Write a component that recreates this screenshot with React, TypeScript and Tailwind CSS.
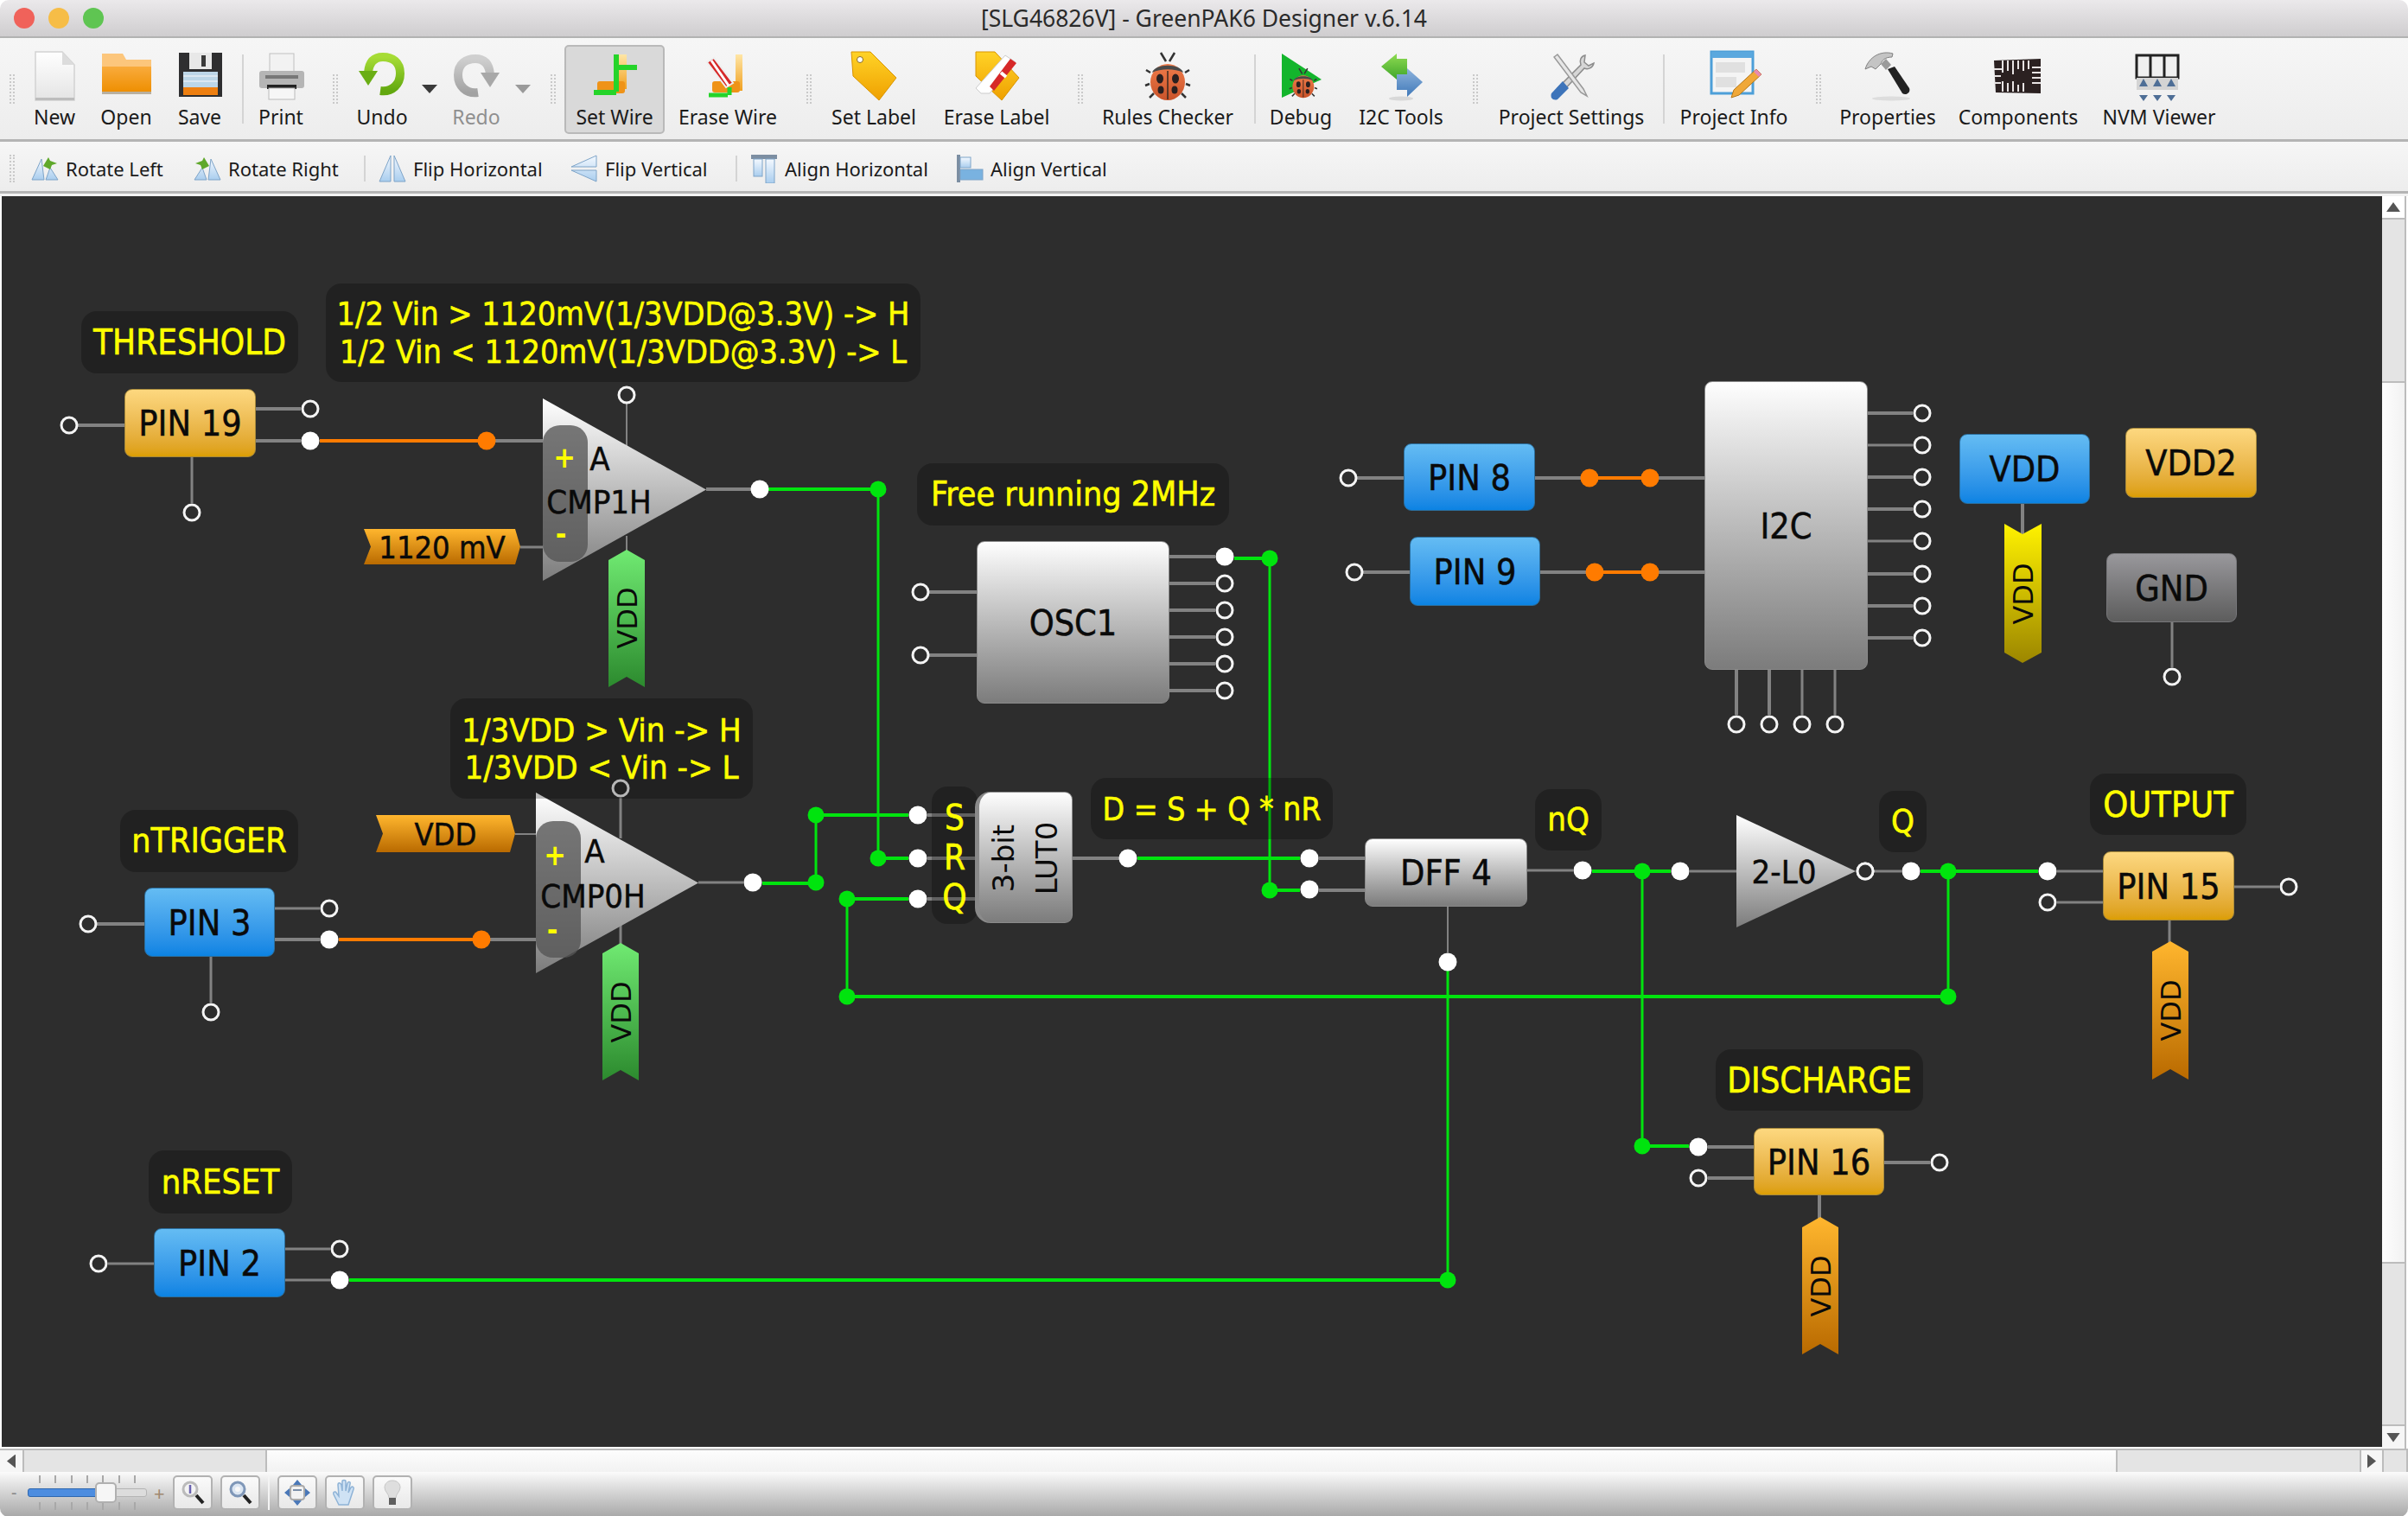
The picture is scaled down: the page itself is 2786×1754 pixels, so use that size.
import type { ReactNode } from "react";
import clsx from "clsx";

const uiFont = "font-['Noto_Sans',sans-serif]";
const schFont = "font-['DejaVu_Sans_Condensed','DejaVu_Sans',sans-serif]";

type Cell =
  | { kind: "handle" | "sep" | "arrow"; w: string; off?: boolean }
  | { kind: "tool"; w: string; label: string; icon: ReactNode; off?: boolean; on?: boolean };

function Gradients() {
  const stops: [string, string, string][] = [
    ["gDoc", "#ffffff", "#e4e4e4"],
    ["gFolder", "#f9ab3c", "#ee8e00"],
    ["gGreen", "#a6dc35", "#62a80f"],
    ["gGrey", "#cfcfcf", "#a2a2a2"],
    ["gTag", "#ffd327", "#efa000"],
    ["gBug", "#f07c4a", "#c9532a"],
    ["gBlue", "#8fb4dd", "#3f78b8"],
    ["gLime", "#8fdc52", "#3fa52a"],
    ["gPale", "#ffe6a6", "#f0a020"],
    ["gTri", "#ffffff", "#7c7c7c"],
    ["gTagG", "#70ea72", "#2c8a2e"],
    ["gTagO", "#ffb62e", "#b96a00"],
    ["gTagY", "#fff200", "#9c8600"],
    ["gSky", "#f4f9ff", "#a9cdee"],
  ];
  return (
    <svg className="absolute h-0 w-0" aria-hidden="true">
      <defs>
        {stops.map(([id, a, b]) => (
          <linearGradient key={id} id={id} x1="0" y1="0" x2="0" y2="1">
            <stop offset="0" stopColor={a} />
            <stop offset="1" stopColor={b} />
          </linearGradient>
        ))}
      </defs>
    </svg>
  );
}

function Ic({ children }: { children: ReactNode }) {
  return (
    <svg viewBox="0 0 64 64" className="h-[64px] w-[64px] shrink-0">
      {children}
    </svg>
  );
}

function Bug({ t = "" }: { t?: string }) {
  return (
    <g transform={t}>
      <path d="M24 5l6 10M40 5l-6 10" stroke="#333" strokeWidth="2.5" fill="none" />
      <path d="M12 28l-5-3M52 28l5-3M11 41l-5 2M53 41l5 2M16 52l-5 5M48 52l5 5" stroke="#333" strokeWidth="2.5" />
      <ellipse cx="32" cy="39" rx="20" ry="21" fill="url(#gBug)" />
      <path d="M14 28c3-11 33-11 36 0-10-5-26-5-36 0z" fill="#4a4a4a" />
      <path d="M32 26v33" stroke="#3a2a20" strokeWidth="1.5" />
      <ellipse cx="23" cy="35" rx="4" ry="5.5" fill="#2a2020" />
      <ellipse cx="41" cy="35" rx="4" ry="5.5" fill="#2a2020" />
      <ellipse cx="24" cy="48" rx="3.5" ry="4.5" fill="#2a2020" />
      <ellipse cx="40" cy="48" rx="3.5" ry="4.5" fill="#2a2020" />
    </g>
  );
}

const icons = {
  file: (
    <Ic>
      <path d="M10 4h31l14 15v41H10z" fill="url(#gDoc)" stroke="#d2d2d2" strokeWidth="1.5" />
      <path d="M41 4v15h14z" fill="#dcdcdc" />
      <rect x="10" y="57" width="45" height="3" fill="#bdbdbd" />
    </Ic>
  ),
  open: (
    <Ic>
      <path d="M4 6h24l4 7h29v10H4z" fill="#fcc67c" />
      <rect x="4" y="21" width="57" height="30" fill="url(#gFolder)" />
      <rect x="4" y="50" width="57" height="3" fill="#b9b0a0" />
    </Ic>
  ),
  save: (
    <Ic>
      <path d="M8 5h50v51H8z" fill="#2e2e30" />
      <rect x="20" y="5" width="26" height="19" fill="#e8e8e8" />
      <rect x="34" y="8" width="5" height="13" fill="#3a3a3a" />
      <rect x="13" y="27" width="40" height="18" fill="#bcd6e8" />
      <path d="M13 32h40M13 38h40" stroke="#e6eef4" strokeWidth="1.5" />
      <rect x="13" y="45" width="40" height="9" fill="#ee7f10" />
    </Ic>
  ),
  print: (
    <Ic>
      <rect x="19" y="6" width="28" height="22" fill="#f2f2f2" stroke="#c0c0c0" />
      <rect x="7" y="26" width="52" height="20" rx="3" fill="#b5b5b5" />
      <rect x="14" y="31" width="38" height="4" fill="#777" />
      <rect x="16" y="42" width="34" height="5" fill="#222" />
      <rect x="18" y="46" width="30" height="13" fill="#f6f6f6" stroke="#bbb" />
    </Ic>
  ),
  undo: (
    <Ic>
      <path d="M30 49c14 2 23-8 23-20 0-13-9-19-20-19S17 17 16 28" fill="none" stroke="url(#gGreen)" strokeWidth="10" />
      <path d="M5 26l22 0-11 17z" fill="#6aae14" />
    </Ic>
  ),
  redo: (
    <Ic>
      <path d="M34 51c-14 2-23-8-23-20 0-13 9-19 20-19s16 7 17 18" fill="none" stroke="url(#gGrey)" strokeWidth="10" />
      <path d="M59 28l-22 0 11 17z" fill="#a8a8a8" />
    </Ic>
  ),
  setWire: (
    <Ic>
      <rect x="37" y="7" width="9" height="40" fill="url(#gPale)" />
      <rect x="12" y="38" width="32" height="14" rx="3" fill="#ef9318" />
      <path d="M34 7v43M34 22h24M8 51h26" stroke="#25d42a" strokeWidth="6" fill="none" />
    </Ic>
  ),
  eraseWire: (
    <Ic>
      <rect x="41" y="7" width="8" height="42" fill="url(#gPale)" />
      <rect x="14" y="38" width="32" height="13" rx="3" fill="#ef9318" />
      <path d="M10 54h22M34 45v9" stroke="#25d42a" strokeWidth="5" fill="none" />
      <path d="M8 16l8-5 22 29-8 5z" fill="#d62828" stroke="#eee" strokeWidth="2" />
      <path d="M13 14l20 29" stroke="#fff" strokeWidth="3" />
    </Ic>
  ),
  setLabel: (
    <Ic>
      <path d="M6 4h22l30 30-20 26L8 32z" fill="url(#gTag)" stroke="#d99400" />
      <circle cx="16" cy="13" r="3.5" fill="#fff" stroke="#8a6a20" />
    </Ic>
  ),
  eraseLabel: (
    <Ic>
      <path d="M8 4h22l28 30-20 26L8 32z" fill="url(#gTag)" stroke="#d99400" />
      <path d="M14 52l-6-6 34-38 12 8-30 36z" fill="#fff" stroke="#ccc" />
      <path d="M24 44l24-32 7 5-26 32z" fill="#d62828" />
      <path d="M37 28l6 5" stroke="#fff" strokeWidth="4" />
    </Ic>
  ),
  bug: (
    <Ic>
      <Bug />
    </Ic>
  ),
  debug: (
    <Ic>
      <path d="M10 6l46 30-46 21z" fill="#13b52c" />
      <Bug t="translate(15 20) scale(0.62)" />
    </Ic>
  ),
  i2c: (
    <Ic>
      <ellipse cx="32" cy="58" rx="14" ry="2.5" fill="#d8d8d8" />
      <path d="M9 21L27 6v6h12v18H27v6z" fill="url(#gLime)" />
      <path d="M57 39L39 23v7H27v18h12v8z" fill="url(#gBlue)" />
    </Ic>
  ),
  settings: (
    <Ic>
      <path d="M48 8c-5 1-7 6-5 11L16 46l5 5 26-28c5 2 10-1 11-6l-6 3-5-4z" fill="#d6d6d6" stroke="#8c8c8c" strokeWidth="1.5" />
      <path d="M12 10l4-3 30 40 4 8-7-4z" fill="#e6e6e6" stroke="#999" strokeWidth="1.5" />
      <path d="M22 38l7 8-13 13c-5 2-9-2-7-7z" fill="#3d74ba" />
    </Ic>
  ),
  info: (
    <Ic>
      <rect x="6" y="4" width="48" height="48" fill="#f4f4f4" stroke="#4d9fd8" strokeWidth="3" />
      <rect x="6" y="4" width="48" height="7" fill="#5aa8de" />
      <rect x="11" y="16" width="34" height="12" fill="#e0e0e0" />
      <rect x="11" y="33" width="24" height="12" fill="#e0e0e0" />
      <path d="M58 24l6 6-26 24-9 3 3-9z" fill="#f0a838" stroke="#b57818" />
      <path d="M58 24l6 6-3 3-6-6z" fill="#e88ab0" />
    </Ic>
  ),
  hammer: (
    <Ic>
      <path d="M6 24C10 10 24 2 38 6l-1 4c-8 0-12 4-13 8l-6 6-5-3z" fill="#c4c4c4" stroke="#808080" />
      <path d="M24 18l6-6 6 7-6 6z" fill="#9a9a9a" />
      <path d="M32 24l8-3 17 25c2 5-4 9-8 6z" fill="#222" />
      <ellipse cx="36" cy="58" rx="22" ry="2.5" fill="#ddd" />
    </Ic>
  ),
  chip: (
    <Ic>
      <path d="M4 14l54-2v40l-52-1z" fill="#2b2121" />
      <path d="M14 14v14M20 14v12M26 14v16M32 14v10M38 14v12M44 14v10M4 24h10M4 32h8M4 40h8M48 22h10M48 28h10M48 34h10M48 40h10M14 50V38M20 50V40M26 50V38M32 50v-8M38 50V40"
        stroke="#e8e4e4" strokeWidth="2" fill="none" />
    </Ic>
  ),
  nvm: (
    <Ic>
      <rect x="6" y="8" width="48" height="26" fill="#f0f0f0" stroke="#222" strokeWidth="3" />
      <path d="M22 8v26M38 8v26" stroke="#222" strokeWidth="3" />
      <rect x="6" y="34" width="48" height="14" fill="#d4d4d4" />
      <path d="M14 35l-5 9h10zM30 35l-5 9h10zM46 35l-5 9h10z" fill="#4e6e96" />
      <path d="M9 54h10l-5 7zM25 54h10l-5 7zM41 54h10l-5 7z" fill="#4e6e96" />
    </Ic>
  ),
};

const toolbar: Cell[] = [
  { kind: "handle", w: "w-[28px]" },
  { kind: "tool", w: "w-[70px]", label: "New", icon: icons.file },
  { kind: "tool", w: "w-[96px]", label: "Open", icon: icons.open },
  { kind: "tool", w: "w-[74px]", label: "Save", icon: icons.save },
  { kind: "sep", w: "w-[26px]" },
  { kind: "tool", w: "w-[62px]", label: "Print", icon: icons.print },
  { kind: "handle", w: "w-[64px]" },
  { kind: "tool", w: "w-[44px]", label: "Undo", icon: icons.undo },
  { kind: "arrow", w: "w-[66px]" },
  { kind: "tool", w: "w-[42px]", label: "Redo", icon: icons.redo, off: true },
  { kind: "arrow", w: "w-[66px]", off: true },
  { kind: "handle", w: "w-[4px]" },
  { kind: "tool", w: "w-[116px] ml-[11px]", label: "Set Wire", icon: icons.setWire, on: true },
  { kind: "tool", w: "w-[146px]", label: "Erase Wire", icon: icons.eraseWire },
  { kind: "handle", w: "w-[42px]" },
  { kind: "tool", w: "w-[108px]", label: "Set Label", icon: icons.setLabel },
  { kind: "tool", w: "w-[176px]", label: "Erase Label", icon: icons.eraseLabel },
  { kind: "handle", w: "w-[18px]" },
  { kind: "tool", w: "w-[184px]", label: "Rules Checker", icon: icons.bug },
  { kind: "sep", w: "w-[18px]" },
  { kind: "tool", w: "w-[88px]", label: "Debug", icon: icons.debug },
  { kind: "tool", w: "w-[144px]", label: "I2C Tools", icon: icons.i2c },
  { kind: "handle", w: "w-[28px]" },
  { kind: "tool", w: "w-[194px]", label: "Project Settings", icon: icons.settings },
  { kind: "sep", w: "w-[20px]" },
  { kind: "tool", w: "w-[142px]", label: "Project Info", icon: icons.info },
  { kind: "handle", w: "w-[54px]" },
  { kind: "tool", w: "w-[106px]", label: "Properties", icon: icons.hammer },
  { kind: "tool", w: "w-[196px]", label: "Components", icon: icons.chip },
  { kind: "tool", w: "w-[130px]", label: "NVM Viewer", icon: icons.nvm },
];

function Handle({ w, tall = false }: { w: string; tall?: boolean }) {
  return (
    <div className={clsx("flex shrink-0 items-center justify-center", w)}>
      <div className={clsx("w-[6px] shrink-0 border-x-2 border-dotted border-[#c9c9c9]", tall ? "h-[34px]" : "h-[32px]")} />
    </div>
  );
}

function Sep({ w }: { w: string }) {
  return (
    <div className={clsx("flex shrink-0 items-center justify-center", w)}>
      <div className="h-[80px] w-[2px] bg-[#d4d4d4]" />
    </div>
  );
}

function ToolButton({ cell }: { cell: Extract<Cell, { kind: "tool" }> }) {
  return (
    <div
      className={clsx(
        "mt-[8px] flex h-[103px] shrink-0 flex-col items-center rounded-[5px] border-2 pt-[2px]",
        cell.w,
        cell.on ? "border-[#b9b9b9] bg-[#d9d9d9]" : "border-transparent",
      )}
    >
      {cell.icon}
      <span className={clsx("text-[23px] leading-[30px] whitespace-nowrap", cell.off ? "text-[#8f8f8f]" : "text-[#1a1a1a]")}>
        {cell.label}
      </span>
    </div>
  );
}

function MainToolbar() {
  return (
    <div className="flex h-[120px] shrink-0 items-start border-b-[3px] border-[#b4b4b4] bg-linear-to-b from-[#f6f6f6] to-[#ededed]">
      {toolbar.map((cell, i) => {
        if (cell.kind === "tool") return <ToolButton key={i} cell={cell} />;
        const body =
          cell.kind === "handle" ? (
            <Handle w={cell.w} tall />
          ) : cell.kind === "sep" ? (
            <Sep w={cell.w} />
          ) : (
            <div className={clsx("flex shrink-0 justify-center pt-[54px]", cell.w)}>
              <div className={clsx("h-[10px] w-[18px] [clip-path:polygon(0_0,100%_0,50%_100%)]", cell.off ? "bg-[#9a9a9a]" : "bg-[#3a3a3a]")} />
            </div>
          );
        return (
          <div key={i} className={clsx("flex h-[117px] shrink-0 items-center", cell.w, cell.kind === "arrow" && "items-start")}>
            {body}
          </div>
        );
      })}
    </div>
  );
}

function Ic2({ children }: { children: ReactNode }) {
  return (
    <svg viewBox="0 0 32 34" className="h-[34px] w-[32px] shrink-0">
      {children}
    </svg>
  );
}

const smallIcons = {
  rotL: (
    <Ic2>
      <path d="M12 6L1 30h14zM17 30h14L22 16z" fill="url(#gSky)" stroke="#7ea4c8" />
      <path d="M14 14l6-10 2 4 8 3-6 2-2 5z" fill="#5fa82a" />
    </Ic2>
  ),
  rotR: (
    <Ic2>
      <path d="M20 6l11 24H17zM15 30H1l9-14z" fill="url(#gSky)" stroke="#7ea4c8" />
      <path d="M18 14L12 4l-2 4-8 3 6 2 2 5z" fill="#5fa82a" />
    </Ic2>
  ),
  flipH: (
    <Ic2>
      <path d="M14 2v30H1zM18 2v30h13z" fill="url(#gSky)" stroke="#7ea4c8" />
    </Ic2>
  ),
  flipV: (
    <Ic2>
      <path d="M30 15H1L30 2zM30 19H1l29 13z" fill="url(#gSky)" stroke="#7ea4c8" />
    </Ic2>
  ),
  alignH: (
    <Ic2>
      <rect x="1" y="1" width="30" height="5" fill="#7c8ea2" />
      <rect x="4" y="6" width="10" height="20" fill="url(#gSky)" stroke="#7ea4c8" />
      <rect x="18" y="6" width="10" height="28" fill="url(#gSky)" stroke="#7ea4c8" />
    </Ic2>
  ),
  alignV: (
    <Ic2>
      <rect x="1" y="1" width="4" height="32" fill="#7c8ea2" />
      <rect x="5" y="4" width="12" height="12" fill="url(#gSky)" stroke="#7ea4c8" />
      <rect x="5" y="18" width="26" height="12" fill="#79b2e0" stroke="#7ea4c8" />
    </Ic2>
  ),
};

const toolbar2 = [
  { label: "Rotate Left", icon: smallIcons.rotL, w: "w-[188px]" },
  { label: "Rotate Right", icon: smallIcons.rotR, w: "w-[190px]" },
  { sep: true, w: "w-[16px]" },
  { label: "Flip Horizontal", icon: smallIcons.flipH, w: "w-[222px] ml-[8px]" },
  { label: "Flip Vertical", icon: smallIcons.flipV, w: "w-[184px]" },
  { sep: true, w: "w-[16px]" },
  { label: "Align Horizontal", icon: smallIcons.alignH, w: "w-[238px] ml-[8px]" },
  { label: "Align Vertical", icon: smallIcons.alignV, w: "w-[190px]" },
];

function SecondToolbar() {
  return (
    <div className="flex h-[60px] shrink-0 items-center border-b-[3px] border-[#b4b4b4] bg-linear-to-b from-[#f6f6f6] to-[#ededed] pt-[5px]">
      <Handle w="w-[28px] mr-[8px]" />
      {toolbar2.map((it, i) =>
        it.sep ? (
          <div key={i} className={clsx("flex justify-center", it.w)}>
            <div className="h-[30px] w-[2px] bg-[#d4d4d4]" />
          </div>
        ) : (
          <div key={i} className={clsx("flex shrink-0 items-center gap-[8px]", it.w)}>
            {it.icon}
            <span className="text-[22px] whitespace-nowrap text-[#1a1a1a]">{it.label}</span>
          </div>
        ),
      )}
    </div>
  );
}

type Seg = [number, number, number, number, number?];

const grayWires: Seg[] = [
  [90, 492, 144, 492, 4], [296, 473, 348, 473, 4], [296, 510, 348, 510, 4], [222, 529, 222, 582, 3],
  [563, 510, 640, 510, 4], [602, 633, 640, 633, 3], [725, 467, 725, 520, 2], [725, 620, 725, 640, 2], [817, 566, 870, 566, 4],
  [112, 1069, 167, 1069, 4], [318, 1051, 370, 1051, 3], [318, 1087, 370, 1087, 4], [244, 1107, 244, 1160, 3],
  [557, 1087, 630, 1087, 4], [596, 965, 630, 965, 2], [718, 923, 718, 970, 3], [718, 1070, 718, 1095, 3], [808, 1021, 860, 1021, 3],
  [125, 1462, 178, 1462, 3], [330, 1445, 382, 1445, 3], [330, 1481, 382, 1481, 3],
  [1075, 685, 1130, 685, 4], [1075, 758, 1130, 758, 4],
  [1353, 644, 1406, 644, 4], [1353, 675, 1406, 675, 4], [1353, 706, 1406, 706, 4], [1353, 737, 1406, 737, 4], [1353, 768, 1406, 768, 4], [1353, 799, 1406, 799, 4],
  [1073, 943, 1135, 943, 4], [1073, 993, 1135, 993, 4], [1073, 1040, 1135, 1040, 4],
  [1241, 993, 1295, 993, 4], [1526, 993, 1579, 993, 4], [1526, 1030, 1579, 1030, 4],
  [1767, 1007, 1820, 1007, 3], [1955, 1008, 2020, 1008, 3], [1675, 1049, 1675, 1102, 2],
  [2158, 1008, 2200, 1008, 3], [2380, 1008, 2433, 1008, 3], [2380, 1044, 2433, 1044, 3], [2585, 1026, 2637, 1026, 3], [2510, 1065, 2510, 1095, 3],
  [1976, 1327, 2029, 1327, 4], [1976, 1363, 2029, 1363, 4], [2180, 1345, 2233, 1345, 4], [2105, 1383, 2105, 1412, 4],
  [1570, 553, 1624, 553, 4], [1776, 553, 1839, 553, 4], [1909, 553, 1972, 553, 4],
  [1577, 662, 1631, 662, 4], [1782, 662, 1845, 662, 4], [1909, 662, 1972, 662, 4],
  [2161, 478, 2213, 478, 4], [2161, 515, 2213, 515, 3], [2161, 552, 2213, 552, 4], [2161, 589, 2213, 589, 4],
  [2161, 626, 2213, 626, 3], [2161, 664, 2213, 664, 4], [2161, 701, 2213, 701, 4], [2161, 738, 2213, 738, 4],
  [2009, 775, 2009, 827, 4], [2047, 775, 2047, 827, 4], [2085, 775, 2085, 827, 3], [2123, 775, 2123, 827, 3],
  [2340, 583, 2340, 618, 4], [2513, 720, 2513, 772, 3],
];

const greenWires: Seg[] = [
  [889, 566, 1016, 566, 4], [1016, 566, 1016, 993, 3], [1016, 993, 1051, 993, 4],
  [882, 1022, 944, 1022, 4], [944, 1022, 944, 943, 3], [944, 943, 1051, 943, 4],
  [980, 1040, 1051, 1040, 4], [980, 1040, 980, 1153, 3], [980, 1153, 2254, 1153, 4],
  [1428, 646, 1469, 646, 4], [1469, 646, 1469, 1030, 3], [1469, 1030, 1504, 1030, 4],
  [1316, 993, 1504, 993, 4], [1842, 1008, 1933, 1008, 4], [1900, 1008, 1900, 1326, 3], [1900, 1326, 1954, 1326, 4],
  [2222, 1008, 2358, 1008, 4], [2254, 1008, 2254, 1153, 3], [1675, 1113, 1675, 1481, 3], [404, 1481, 1675, 1481, 4],
];

const orangeWires: Seg[] = [
  [370, 510, 563, 510, 4], [392, 1087, 557, 1087, 4], [1839, 553, 1909, 553, 4], [1845, 662, 1909, 662, 4],
];

const greenDots = [[1016, 566], [1016, 993], [944, 1021], [944, 943], [980, 1040], [980, 1153], [1469, 646], [1469, 1030], [1900, 1008], [1900, 1326], [2254, 1008], [2254, 1153], [1675, 1481]];
const orangeDots = [[563, 510], [557, 1087], [1839, 553], [1909, 553], [1845, 662], [1909, 662]];
const hollow = [
  [80, 492], [359, 473], [222, 593], [725, 457], [102, 1069], [381, 1051], [244, 1171], [718, 912], [114, 1462], [393, 1445],
  [1065, 685], [1065, 758], [1417, 675], [1417, 706], [1417, 737], [1417, 768], [1417, 799], [1560, 553], [1567, 662],
  [2224, 478], [2224, 515], [2224, 552], [2224, 589], [2224, 626], [2224, 664], [2224, 701], [2224, 738],
  [2009, 838], [2047, 838], [2085, 838], [2123, 838], [2513, 783], [2158, 1008], [2369, 1044], [2648, 1026], [1965, 1363], [2244, 1345],
];
const filled = [
  [359, 510], [879, 566], [381, 1087], [871, 1021], [393, 1481], [1417, 644], [1062, 943], [1062, 993], [1062, 1040], [1305, 993],
  [1515, 993], [1515, 1029], [1831, 1007], [1944, 1008], [1675, 1113], [2211, 1008], [2369, 1008], [1965, 1327],
];

function Wires({ segs, color }: { segs: Seg[]; color: string }) {
  return (
    <>
      {segs.map(([x1, y1, x2, y2, w], i) => (
        <line key={i} x1={x1} y1={y1} x2={x2} y2={y2} stroke={color} strokeWidth={w ?? 3} />
      ))}
    </>
  );
}

function VTag({ cx, y0, y1, half, fill, text, tc }: { cx: number; y0: number; y1: number; half: number; fill: string; text: number; tc: number }) {
  const x0 = cx - half;
  const x2 = cx + half;
  return (
    <g>
      <polygon points={`${cx},${y0} ${x2},${y0 + 12} ${x2},${y1} ${cx},${y1 - 12} ${x0},${y1} ${x0},${y0 + 12}`} fill={fill} />
      <text x={tc} y={text} transform={`rotate(-90 ${tc} ${text})`} textAnchor="middle" dominantBaseline="central" className="font-['DejaVu_Sans',sans-serif] text-[32px]" fill="#0a0a0a">
        VDD
      </text>
    </g>
  );
}

function HTag({ x0, x1, y0, y1, text }: { x0: number; x1: number; y0: number; y1: number; text: string }) {
  const cy = (y0 + y1) / 2;
  return (
    <g>
      <polygon points={`${x0},${y0} ${x1 - 6},${y0} ${x1},${cy} ${x1 - 6},${y1} ${x0},${y1} ${x0 + 8},${cy}`} fill="url(#gTagO)" />
      <text x={(x0 + x1) / 2} y={cy + 1} textAnchor="middle" dominantBaseline="central" className={clsx(schFont, "text-[36px] [stroke:#0a0a0a] [stroke-width:0.5px]")} fill="#0a0a0a">
        {text}
      </text>
    </g>
  );
}

function Comparator({ left, apex, top, bottom, pillTop, pillBottom, plus, minus, a, name }: {
  left: number; apex: number; top: number; bottom: number; pillTop: number; pillBottom: number;
  plus: [number, number]; minus: [number, number]; a: [number, number]; name: [number, number, string];
}) {
  return (
    <g>
      <polygon points={`${left},${top} ${apex},${(top + bottom) / 2} ${left},${bottom}`} fill="url(#gTri)" />
      <rect x={left} y={pillTop} width={52} height={pillBottom - pillTop} rx={20} fill="#555" fillOpacity={0.78} />
      <text x={plus[0]} y={plus[1]} textAnchor="middle" dominantBaseline="central" className={clsx(schFont, "text-[34px] font-bold")} fill="#ffff00">+</text>
      <text x={minus[0]} y={minus[1]} textAnchor="middle" dominantBaseline="central" className={clsx(schFont, "text-[34px] font-bold")} fill="#ffff00">-</text>
      <text x={a[0]} y={a[1]} textAnchor="middle" dominantBaseline="central" className={clsx(schFont, "text-[38px] [stroke:#0a0a0a] [stroke-width:0.5px]")} fill="#0a0a0a">A</text>
      <text x={name[0]} y={name[1]} textAnchor="middle" dominantBaseline="central" className={clsx(schFont, "text-[38px] [stroke:#0a0a0a] [stroke-width:0.5px]")} fill="#0a0a0a">{name[2]}</text>
    </g>
  );
}

function Schematic() {
  return (
    <svg viewBox="2 227 2754 1447" className="absolute inset-0 h-full w-full">
      <Wires segs={grayWires} color="#828282" />
      <Wires segs={greenWires} color="#00e40e" />
      <Wires segs={orangeWires} color="#ff7b00" />
      {greenDots.map(([cx, cy], i) => (
        <circle key={i} cx={cx} cy={cy} r={9.5} fill="#00e40e" />
      ))}
      {orangeDots.map(([cx, cy], i) => (
        <circle key={i} cx={cx} cy={cy} r={10.5} fill="#ff7b00" />
      ))}
      {hollow.map(([cx, cy], i) => (
        <circle key={i} cx={cx} cy={cy} r={9} fill="#2d2d2d" stroke="#f4f4f4" strokeWidth={3} />
      ))}
      {filled.map(([cx, cy], i) => (
        <circle key={i} cx={cx} cy={cy} r={10.5} fill="#ffffff" />
      ))}

      <Comparator left={628} apex={817} top={461} bottom={672} pillTop={492} pillBottom={650} plus={[653, 529]} minus={[649, 617]} a={[694, 531]} name={[693, 581, "CMP1H"]} />
      <Comparator left={620} apex={808} top={917} bottom={1126} pillTop={950} pillBottom={1108} plus={[642, 989]} minus={[639, 1075]} a={[688, 985]} name={[686, 1037, "CMP0H"]} />

      <polygon points="2009,943 2147,1008 2009,1073" fill="url(#gTri)" />
      <text x={2064} y={1009} textAnchor="middle" dominantBaseline="central" className={clsx(schFont, "text-[38px] [stroke:#0a0a0a] [stroke-width:0.5px]")} fill="#0a0a0a">2-L0</text>
      <circle cx={2158} cy={1008} r={9} fill="#2d2d2d" stroke="#f4f4f4" strokeWidth={3} />

      <HTag x0={421} x1={602} y0={612} y1={653} text="1120 mV" />
      <HTag x0={435} x1={596} y0={943} y1={986} text="VDD" />

      <VTag cx={725} y0={636} y1={795} half={21} fill="url(#gTagG)" text={715} tc={726} />
      <VTag cx={718} y0={1091} y1={1250} half={21} fill="url(#gTagG)" text={1171} tc={719} />
      <VTag cx={2511} y0={1089} y1={1249} half={21} fill="url(#gTagO)" text={1169} tc={2512} />
      <VTag cx={2106} y0={1408} y1={1567} half={21} fill="url(#gTagO)" text={1488} tc={2107} />

      <polygon points="2319,606 2340,618 2362,606 2362,755 2340,767 2319,755" fill="url(#gTagY)" />
      <text x={2341} y={687} transform="rotate(-90 2341 687)" textAnchor="middle" dominantBaseline="central" className="font-['DejaVu_Sans',sans-serif] text-[32px]" fill="#0a0a0a">
        VDD
      </text>
    </svg>
  );
}

const tones = {
  blue: "from-[#64bcf3] to-[#0a83e3] border-[#2c6f9e]",
  amber: "from-[#fdd87f] to-[#dc9e00] border-[#a88a3c]",
  gray: "from-[#99989c] to-[#5d5d5d] border-[#77777a]",
  logic: "from-[#fefefe] to-[#7c7c7c] border-[#8a8a8a]",
};

function Block({ className, tone, children }: { className: string; tone: keyof typeof tones; children: ReactNode }) {
  return (
    <div className={clsx("absolute flex items-center justify-center rounded-[9px] border bg-linear-to-b pt-[2px] text-[41px] leading-none text-[#0a0a0a] [-webkit-text-stroke:0.5px_#0a0a0a]", tones[tone], className)}>
      {children}
    </div>
  );
}

function Note({ className, children }: { className: string; children: ReactNode }) {
  return (
    <div className={clsx("absolute flex flex-col items-center justify-center rounded-[18px] bg-black/25 whitespace-nowrap text-[#ffff00] [-webkit-text-stroke:0.6px_#ffff00]", className)}>
      {children}
    </div>
  );
}

function Canvas() {
  return (
    <div className={clsx("relative ml-[2px] h-[1447px] w-[2754px] overflow-hidden bg-[#2d2d2d]", schFont)}>
      <Schematic />

      <Note className="left-[92px] top-[133px] h-[72px] w-[251px] text-[40px]">THRESHOLD</Note>
      <Note className="left-[375px] top-[101px] h-[114px] w-[688px] text-[37.5px] leading-[44px]">
        <span>1/2 Vin &gt; 1120mV(1/3VDD@3.3V) -&gt; H</span>
        <span>1/2 Vin &lt; 1120mV(1/3VDD@3.3V) -&gt; L</span>
      </Note>
      <Note className="left-[137px] top-[710px] h-[72px] w-[206px] text-[39px]">nTRIGGER</Note>
      <Note className="left-[519px] top-[581px] h-[116px] w-[350px] pt-[2px] text-[38px] leading-[43px]">
        <span>1/3VDD &gt; Vin -&gt; H</span>
        <span>1/3VDD &lt; Vin -&gt; L</span>
      </Note>
      <Note className="left-[170px] top-[1104px] h-[73px] w-[166px] text-[39.5px]">nRESET</Note>
      <Note className="left-[1059px] top-[309px] h-[72px] w-[361px] text-[39px]">Free running 2MHz</Note>
      <Note className="left-[1260px] top-[673px] h-[71px] w-[280px] pt-[2px] text-[37px]">D = S + Q * nR</Note>
      <Note className="left-[1774px] top-[686px] h-[71px] w-[77px] text-[38px]">nQ</Note>
      <Note className="left-[2172px] top-[688px] h-[71px] w-[55px] text-[38px]">Q</Note>
      <Note className="left-[2416px] top-[668px] h-[71px] w-[181px] pt-[2px] text-[41px]">OUTPUT</Note>
      <Note className="left-[1983px] top-[987px] h-[71px] w-[240px] text-[40px]">DISCHARGE</Note>
      <Note className="left-[1076px] top-[683px] h-[159px] w-[53px] pt-[4px] text-[40px] leading-[46px]">
        <span>S</span>
        <span>R</span>
        <span>Q</span>
      </Note>

      <Block tone="amber" className="left-[142px] top-[223px] h-[79px] w-[152px]">PIN 19</Block>
      <Block tone="blue" className="left-[165px] top-[800px] h-[80px] w-[151px]">PIN 3</Block>
      <Block tone="blue" className="left-[176px] top-[1194px] h-[80px] w-[152px]">PIN 2</Block>
      <Block tone="blue" className="left-[1622px] top-[286px] h-[78px] w-[152px]">PIN 8</Block>
      <Block tone="blue" className="left-[1629px] top-[394px] h-[80px] w-[151px]">PIN 9</Block>
      <Block tone="blue" className="left-[2265px] top-[275px] h-[81px] w-[151px]">VDD</Block>
      <Block tone="amber" className="left-[2457px] top-[268px] h-[81px] w-[152px]">VDD2</Block>
      <Block tone="gray" className="left-[2435px] top-[413px] h-[80px] w-[151px]">GND</Block>
      <Block tone="amber" className="left-[2431px] top-[758px] h-[80px] w-[152px]">PIN 15</Block>
      <Block tone="amber" className="left-[2027px] top-[1078px] h-[78px] w-[151px]">PIN 16</Block>
      <Block tone="logic" className="left-[1128px] top-[399px] h-[188px] w-[223px]">OSC1</Block>
      <Block tone="logic" className="left-[1970px] top-[214px] h-[334px] w-[189px]">I2C</Block>
      <Block tone="logic" className="left-[1577px] top-[743px] h-[79px] w-[188px]">DFF 4</Block>
      <Block tone="logic" className="left-[1126px] top-[689px] h-[152px] w-[113px] rounded-l-[18px] border-l-[5px] [-webkit-text-stroke:0]">
        <div className="flex shrink-0 -rotate-90 flex-col items-center font-['DejaVu_Sans',sans-serif] text-[34px] leading-[50px] font-normal">
          <span>3-bit</span>
          <span>LUT0</span>
        </div>
      </Block>
    </div>
  );
}

function VScrollBar() {
  return (
    <div className="flex h-[1449px] w-[28px] shrink-0 flex-col border-r-2 border-[#bcbcbc] bg-[#e4e4e4]">
      <div className="flex h-[27px] shrink-0 items-center justify-center border-b-2 border-[#bcbcbc] bg-white">
        <div className="h-[11px] w-[16px] bg-[#555] [clip-path:polygon(50%_0,100%_100%,0_100%)]" />
      </div>
      <div className="h-[187px] shrink-0" />
      <div className="h-[1021px] shrink-0 border-y-2 border-[#bcbcbc] bg-linear-to-r from-[#fdfdfd] to-[#f2f2f2]" />
      <div className="flex-1" />
      <div className="flex h-[28px] shrink-0 items-center justify-center border-t-2 border-[#bcbcbc] bg-[#f6f6f6]">
        <div className="h-[11px] w-[16px] bg-[#555] [clip-path:polygon(0_0,100%_0,50%_100%)]" />
      </div>
    </div>
  );
}

function HScrollBar() {
  return (
    <div className="flex h-[27px] shrink-0 border-t-2 border-[#bcbcbc] bg-[#e4e4e4]">
      <div className="flex w-[28px] shrink-0 items-center justify-center border-r-2 border-[#bcbcbc] bg-[#f6f6f6]">
        <div className="h-[16px] w-[10px] bg-[#555] [clip-path:polygon(100%_0,100%_100%,0_50%)]" />
      </div>
      <div className="w-[279px] shrink-0" />
      <div className="w-[2143px] shrink-0 border-x-2 border-[#bcbcbc] bg-linear-to-b from-[#fdfdfd] to-[#f2f2f2]" />
      <div className="flex-1" />
      <div className="flex w-[28px] shrink-0 items-center justify-center border-x-2 border-[#bcbcbc] bg-[#f6f6f6]">
        <div className="h-[16px] w-[10px] bg-[#555] [clip-path:polygon(0_0,100%_50%,0_100%)]" />
      </div>
      <div className="w-[28px] shrink-0 border-r-2 border-[#bcbcbc]" />
    </div>
  );
}

function Ticks() {
  return (
    <div className="flex h-[9px] w-[112px] justify-between">
      {[0, 1, 2, 3, 4, 5, 6].map((i) => (
        <div key={i} className="h-full w-[2px] bg-[#a8a8a8]" />
      ))}
    </div>
  );
}

function StatusButton({ children, className }: { children: ReactNode; className?: string }) {
  return (
    <div className={clsx("flex h-[40px] w-[46px] shrink-0 items-center justify-center rounded-[5px] border-2 border-[#b2b2b2] bg-linear-to-b from-[#fafafa] to-[#e8e8e8]", className)}>
      {children}
    </div>
  );
}

function StatusBar() {
  return (
    <div className="flex h-[52px] shrink-0 items-center rounded-b-[10px] bg-linear-to-b from-[#fbfbfb] to-[#a8a8a8] pb-[4px]">
      <span className="ml-[13px] w-[19px] text-[20px] leading-none text-[#888]">-</span>
      <div className="relative flex h-[40px] w-[138px] shrink-0 flex-col items-center justify-between">
        <Ticks />
        <Ticks />
        <div className="absolute top-[15px] left-0 h-[10px] w-[138px] rounded-[3px] border border-[#b4b4b4] bg-[#dcdcdc]" />
        <div className="absolute top-[15px] left-0 h-[10px] w-[80px] rounded-l-[3px] border border-[#2f68b0] bg-[#4d8de0]" />
        <div className="absolute top-[8px] left-[78px] h-[24px] w-[25px] rounded-[5px] border-2 border-[#b0b0b0] bg-[#f6f6f6]" />
      </div>
      <span className="ml-[8px] w-[24px] text-[22px] leading-none text-[#a08870]">+</span>
      <StatusButton className="ml-[-2px]">
        <svg viewBox="0 0 32 32" className="h-[32px] w-[32px]">
          <circle cx="13" cy="12" r="8" fill="#f4f4f4" stroke="#bbb" strokeWidth="3" />
          <path d="M13 7v10" stroke="#6a62b0" strokeWidth="2.5" />
          <path d="M20 19l8 9" stroke="#222" strokeWidth="4" />
        </svg>
      </StatusButton>
      <StatusButton className="ml-[9px]">
        <svg viewBox="0 0 32 32" className="h-[32px] w-[32px]">
          <circle cx="13" cy="12" r="8" fill="#dce6f2" stroke="#7f97b8" strokeWidth="3" />
          <circle cx="13" cy="12" r="3" fill="#f8f8f8" />
          <path d="M20 19l8 9" stroke="#222" strokeWidth="4" />
        </svg>
      </StatusButton>
      <div className="mx-[9px] h-[40px] w-[2px] shrink-0 bg-[#f4f4f4]" />
      <StatusButton>
        <svg viewBox="0 0 32 32" className="h-[32px] w-[32px]">
          <path d="M16 1l5 6H11zM16 31l-5-6h10zM1 16l6-5v10zM31 16l-6 5V11z" fill="#4a78b8" />
          <rect x="8" y="8" width="16" height="16" rx="3" fill="#f2f2f2" stroke="#aaa" strokeWidth="2" />
          <path d="M11 13h10" stroke="#7a8ea8" strokeWidth="2" />
        </svg>
      </StatusButton>
      <StatusButton className="ml-[9px]">
        <svg viewBox="0 0 32 32" className="h-[32px] w-[32px]">
          <path d="M9 30l-6-12c-1-3 2-4 3-2l3 4-1-13c0-3 3-3 4 0l1 7V3c0-2 4-2 4 0v11l2-9c1-2 4-2 3 1l-2 10 3-6c2-2 4 0 3 2l-4 12-2 6z" fill="#cfe2f4" stroke="#8fb3d6" strokeWidth="1.5" />
        </svg>
      </StatusButton>
      <StatusButton className="ml-[9px]">
        <svg viewBox="0 0 32 32" className="h-[32px] w-[32px]">
          <path d="M16 2c6 0 9 4 9 8 0 5-5 7-5 12h-8c0-5-5-7-5-12 0-4 3-8 9-8z" fill="#dedede" stroke="#c6c6c6" />
          <rect x="12" y="22" width="8" height="8" fill="#5e5e5e" />
        </svg>
      </StatusButton>
    </div>
  );
}

function TitleBar() {
  return (
    <div className="grid h-[44px] shrink-0 grid-cols-[1fr_auto_1fr] items-center rounded-t-[10px] border-b-2 border-[#b2b2b2] bg-linear-to-b from-[#ebe9eb] to-[#cfcdcf]">
      <div className="flex gap-[16px] pl-[16px]">
        <div className="size-[24px] rounded-full bg-[#f0625a]" />
        <div className="size-[24px] rounded-full bg-[#f6bd47]" />
        <div className="size-[24px] rounded-full bg-[#5fc552]" />
      </div>
      <span className="text-[26.5px] leading-none text-[#2a2a2a]">[SLG46826V] - GreenPAK6 Designer v.6.14</span>
      <div />
    </div>
  );
}

export default function App() {
  return (
    <div className={clsx("flex h-[1754px] w-[2786px] flex-col overflow-hidden bg-white", uiFont)}>
      <Gradients />
      <TitleBar />
      <MainToolbar />
      <SecondToolbar />
      <div className="flex h-[3px] shrink-0 bg-[#f2f2f2]" />
      <div className="flex shrink-0 items-start">
        <Canvas />
        <VScrollBar />
      </div>
      <HScrollBar />
      <StatusBar />
    </div>
  );
}
